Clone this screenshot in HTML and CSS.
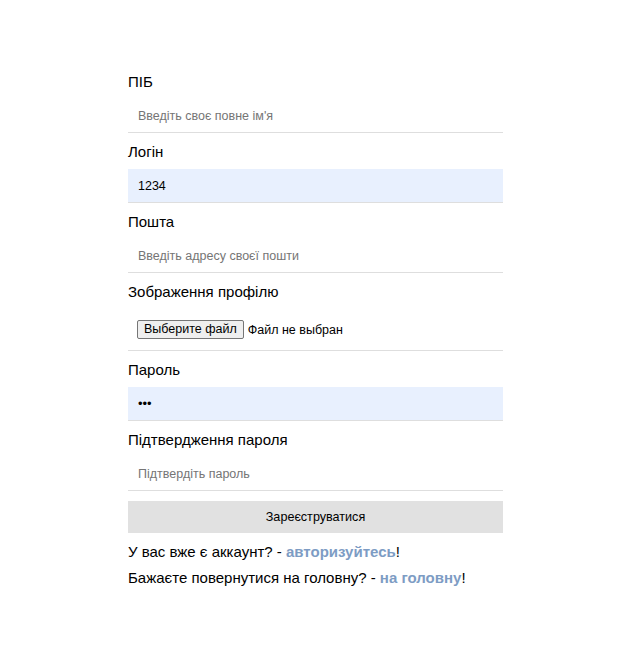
FILE: index.html
```html
<!DOCTYPE html>
<html lang="uk">
<head>
<meta charset="utf-8">
<title>Реєстрація</title>
<link rel="stylesheet" href="styles.css">
</head>
<body>
<div class="page">
  <form class="form">
    <div class="group">
      <label class="label">ПІБ</label>
      <input class="input" type="text" placeholder="Введіть своє повне ім'я">
    </div>
    <div class="group">
      <label class="label">Логін</label>
      <input class="input input-filled" type="text" value="1234">
    </div>
    <div class="group">
      <label class="label">Пошта</label>
      <input class="input" type="email" placeholder="Введіть адресу своєї пошти">
    </div>
    <div class="group">
      <label class="label">Зображення профілю</label>
      <div class="file-input">
        <button type="button" class="file-btn">Выберите файл</button>
        <span class="file-name">Файл не выбран</span>
      </div>
    </div>
    <div class="group">
      <label class="label">Пароль</label>
      <input class="input input-filled input-pass" type="password" value="123">
    </div>
    <div class="group">
      <label class="label">Підтвердження пароля</label>
      <input class="input" type="password" placeholder="Підтвердіть пароль">
    </div>
    <button type="button" class="submit">Зареєструватися</button>
    <div class="notes">
      <p class="note">У вас вже є аккаунт? - <a class="link" href="#">авторизуйтесь</a>!</p>
      <p class="note">Бажаєте повернутися на головну? - <a class="link" href="#">на головну</a>!</p>
    </div>
  </form>
</div>
</body>
</html>
```

FILE: styles.css
```css
* { box-sizing: border-box; }
html, body { margin: 0; padding: 0; background: #fff; }
body { font-family: "Liberation Sans", Arial, sans-serif; color: #000; }
.page {
  display: flex;
  justify-content: center;
  padding: 63px 0 0 9px;
}
.form {
  width: 375px;
  display: flex;
  flex-direction: column;
}
.group {
  display: flex;
  flex-direction: column;
}
.label {
  font-size: 15px;
  line-height: 17px;
  margin: 10px 0 9px;
}
.input {
  height: 34px;
  width: 100%;
  border: none;
  border-bottom: 1px solid #dedede;
  padding: 0 10px;
  font-family: "Liberation Sans", Arial, sans-serif;
  font-size: 12.5px;
  color: #000;
  background: #fff;
  outline: none;
}
.input::placeholder { color: #757575; }
.input-filled { background: #e8f0fe; }
.input-pass { font-size: 13px; letter-spacing: 0; }
.file-input {
  height: 42px;
  display: flex;
  align-items: center;
  padding: 0 9px;
  border-bottom: 1px solid #dedede;
  font-size: 12.5px;
  gap: 4px;
}
.file-btn {
  font-family: "Liberation Sans", Arial, sans-serif;
  font-size: 12.5px;
  height: 19px;
  padding: 0 6px;
  background: #efefef;
  border: 1px solid #767676;
  border-radius: 2px;
  color: #000;
  line-height: 17px;
}
.file-name { color: #000; }
.submit {
  margin-top: 10px;
  height: 32px;
  width: 100%;
  border: none;
  background: #e1e1e1;
  font-family: "Liberation Sans", Arial, sans-serif;
  font-size: 12.6px;
  color: #000;
}
.notes {
  display: flex;
  flex-direction: column;
  margin-top: 6px;
}
.note {
  margin: 0;
  font-size: 15px;
  line-height: 26px;
}
.link {
  color: #7d9cc4;
  font-weight: bold;
  text-decoration: none;
}
```
